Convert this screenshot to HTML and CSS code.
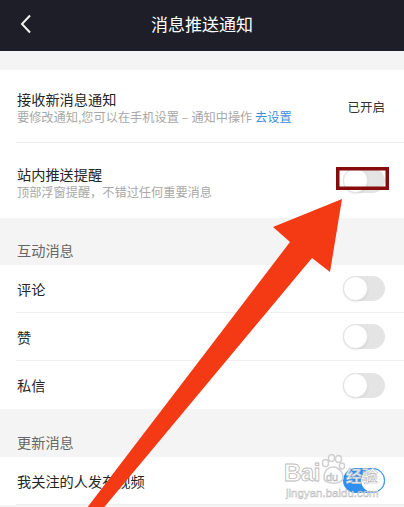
FILE: index.html
```html
<!DOCTYPE html>
<html>

<head>
  <meta charset="utf-8">
  <title>消息推送通知</title>
  <link rel="stylesheet" href="styles.css">
</head>

<body>
  <div class="page">
    <div class="topbar">
      <div class="back">
        <svg width="12" height="20" viewBox="0 0 12 20">
          <path d="M10 1.5 L2 10 L10 18.5" fill="none" stroke="#f2f2f2" stroke-width="2" />
        </svg>
      </div>
      <div class="title">消息推送通知</div>
      <div></div>
    </div>

    <div class="gap"></div>

    <div class="group">
      <div class="row tall first">
        <div class="text">
          <div class="name">接收新消息通知</div>
          <div class="desc">要修改通知,您可以在手机设置<span class="dash">–</span>通知中操作 <span class="link">去设置</span></div>
        </div>
        <div class="value">已开启</div>
      </div>
      <div class="row tall second last">
        <div class="text">
          <div class="name">站内推送提醒</div>
          <div class="desc">顶部浮窗提醒，不错过任何重要消息</div>
        </div>
        <div class="switch"><span class="knob"></span></div>
      </div>
    </div>

    <div class="section">互动消息</div>
    <div class="group">
      <div class="row">
        <div class="name">评论</div>
        <div class="switch"><span class="knob"></span></div>
      </div>
      <div class="row">
        <div class="name">赞</div>
        <div class="switch"><span class="knob"></span></div>
      </div>
      <div class="row last">
        <div class="name">私信</div>
        <div class="switch"><span class="knob"></span></div>
      </div>
    </div>

    <div class="section second-section">更新消息</div>
    <div class="group">
      <div class="row">
        <div class="name">我关注的人发布视频</div>
        <div class="switch on"><span class="knob"></span></div>
      </div>
    </div>

    <!-- annotation drawn over the screenshot -->
    <svg class="overlay" width="404" height="507" viewBox="0 0 404 507">
      <rect x="337.75" y="168.75" width="49.5" height="19.5" fill="none" stroke="#870b0b" stroke-width="3.5" />
      <polygon points="80,517 290,242 273,227 342,199 330,272 312,258 96,517" fill="#f43a14" />
    </svg>

    <div class="watermark">
      <div class="mark-top">
        <span class="bai">Bai</span>
        <svg class="paw" width="24" height="32" viewBox="0 0 24 32">
          <g fill="none" stroke="#cfcfcf" stroke-width="1.5">
            <ellipse cx="4.5" cy="9" rx="3" ry="3.6" />
            <ellipse cx="10.5" cy="4" rx="3" ry="3.4" />
            <ellipse cx="17.5" cy="5" rx="3" ry="3.4" />
            <ellipse cx="21" cy="12" rx="2.6" ry="3" />
            <path d="M3 24 C3 16 8 13 12 13 C17 13 22 17 22 24 C22 31 3 31 3 24 Z" />
          </g>
          <text x="5" y="27" font-size="11" fill="#ffffff" stroke="#b8b8b8" stroke-width="0.6" font-family="Liberation Sans">du</text>
        </svg>
        <span class="jy">经验</span>
      </div>
      <div class="site">jingyan.baidu.com</div>
    </div>
  </div>
</body>

</html>
```

FILE: styles.css
```css
body {
  margin: 0;
  padding: 0;
  background-color: #f4f4f4;
  font-family: "Noto Sans CJK SC", "Noto Sans", sans-serif;
  color: #222;
}

.page {
  position: relative;
  width: 404px;
  height: 507px;
  overflow: hidden;
  background-color: #f4f4f4;
}

.topbar {
  height: 51px;
  background-color: #1d1e28;
  display: grid;
  grid-template-columns: 44px 1fr 44px;
  align-items: center;
}

.back {
  display: flex;
  padding-left: 20px;
  padding-bottom: 4px;
}

.title {
  text-align: center;
  color: #fff;
  font-size: 17px;
  line-height: 20px;
  padding-bottom: 4px;
}

.gap {
  height: 19px;
}

.group {
  background-color: #fff;
}

.row {
  margin-left: 16px;
  padding: 0 19px 0 1px;
  height: 48px;
  box-sizing: border-box;
  display: flex;
  align-items: center;
  justify-content: space-between;
  border-bottom: 1px solid #eeeeee;
}

.row.last {
  border-bottom: none;
}

.row.tall {
  height: 73px;
}

.row.tall.second {
  height: 75px;
}

.text {
  margin-top: 4px;
}

.name {
  font-size: 14.2px;
  line-height: 18px;
  color: #262626;
}

.desc {
  font-size: 12.2px;
  line-height: 18px;
  color: #a8a8a8;
}

.dash {
  margin: 0 3px;
}

.link {
  color: #3b8fd9;
}

.value {
  font-size: 12.5px;
  color: #333;
}

.section {
  height: 47px;
  box-sizing: border-box;
  padding: 23px 0 0 17px;
  font-size: 14.2px;
  line-height: 18px;
  color: #666;
}

.second-section {
  height: 48px;
  padding-top: 24px;
}

.switch {
  position: relative;
  width: 42px;
  height: 25px;
  border-radius: 13px;
  background-color: #e4e4e4;
}

.knob {
  position: absolute;
  left: 0;
  top: 0;
  width: 23px;
  height: 23px;
  border-radius: 50%;
  background-color: #fff;
  border: 1px solid #e2e2e2;
  box-shadow: 0 1px 2px rgba(0, 0, 0, 0.08);
}

.switch.on {
  background-color: #2e8ff0;
}

.switch.on .knob {
  left: auto;
  right: 0;
  border: 1px solid #2e8ff0;
  box-shadow: none;
}

.overlay {
  position: absolute;
  left: 0;
  top: 0;
}

.watermark {
  position: absolute;
  left: 284px;
  top: 450px;
  width: 104px;
  font-family: "Liberation Sans", sans-serif;
}

.mark-top {
  display: flex;
  align-items: flex-end;
  height: 36px;
}

.bai {
  font-size: 24px;
  line-height: 26px;
  font-weight: bold;
  color: rgba(255, 255, 255, 0.85);
  -webkit-text-stroke: 0.9px #bdbdbd;
  letter-spacing: -0.5px;
}

.paw {
  margin: 0 1px;
}

.jy {
  font-family: "Noto Sans CJK SC", sans-serif;
  font-size: 16px;
  line-height: 21px;
  font-weight: bold;
  color: rgba(255, 255, 255, 0.85);
  -webkit-text-stroke: 0.6px #b8b8b8;
}

.site {
  font-size: 11.5px;
  line-height: 14px;
  color: rgba(255, 255, 255, 0.85);
  -webkit-text-stroke: 0.5px #b8b8b8;
  margin-left: 2px;
}
```
